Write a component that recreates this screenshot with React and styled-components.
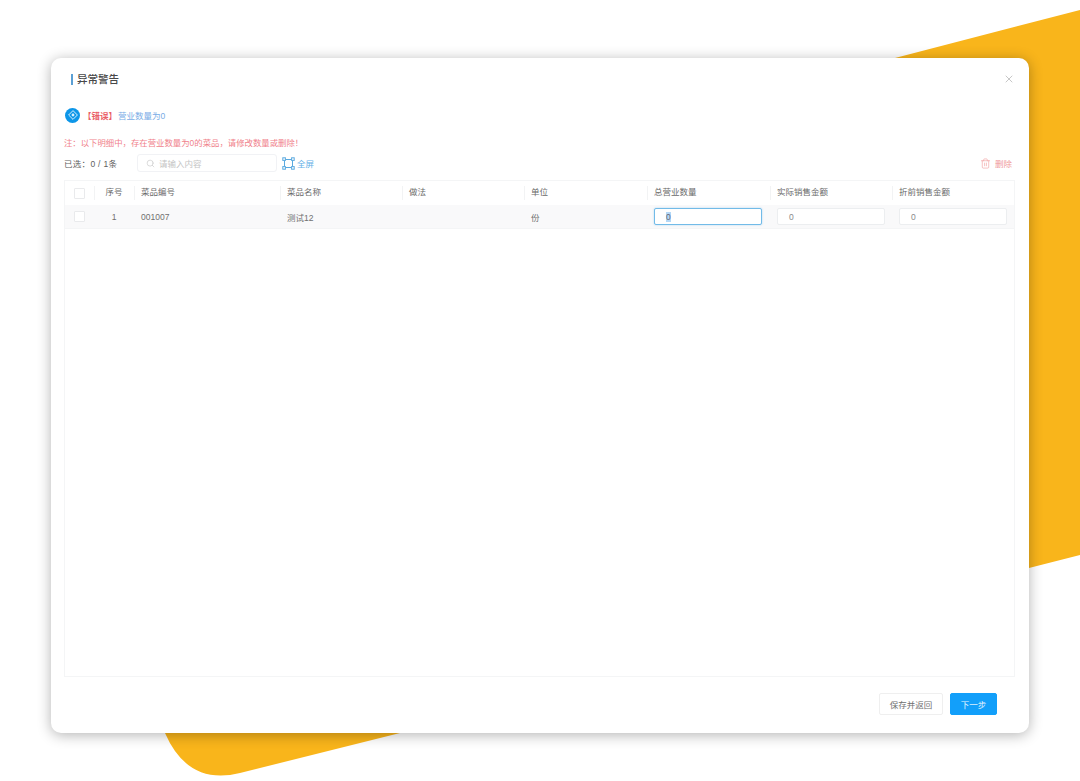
import React from "react";
import styled, { createGlobalStyle } from "styled-components";
import { X, Search, Trash2 } from "lucide-react";

const GlobalStyle = createGlobalStyle`
  html, body {
    margin: 0;
    padding: 0;
    background: #fff;
  }
  body {
    font-family: "Liberation Sans", "Noto Sans CJK SC", sans-serif;
    color: #555;
  }
`;

const columns = [
  { label: "序号", center: true },
  { label: "菜品编号" },
  { label: "菜品名称" },
  { label: "做法" },
  { label: "单位" },
  { label: "总营业数量" },
  { label: "实际销售金额" },
  { label: "折前销售金额" },
];

const App = () => {
  return (
    <Page>
      <GlobalStyle />
      <Backdrop viewBox="0 0 1080 781" aria-hidden="true">
        <path d="M895 58 L1080 10 L1080 555 L1029 568 L400 733 L240 773 Q188 786 165 733 L165 600 Z" fill="#f9b51b" />
      </Backdrop>
      <Modal>
        <Header>
          <TitleBar />
          <Title>异常警告</Title>
          <CloseIcon size={12} strokeWidth={1.3} />
        </Header>

        <Alert>
          <AlertIcon>
            <svg width="14" height="14" viewBox="0 0 14 14" fill="none">
              <path d="M7 2.6 L11.4 7 L7 11.4 L2.6 7 Z" stroke="#d8effd" strokeWidth="1" />
              <circle cx="7" cy="7" r="1.4" fill="#d8effd" />
            </svg>
          </AlertIcon>
          <AlertTag>【错误】</AlertTag>
          <AlertText>营业数量为0</AlertText>
        </Alert>

        <Note>注：以下明细中，存在营业数量为0的菜品，请修改数量或删除！</Note>

        <Toolbar>
          <Selected>已选：0 / 1条</Selected>
          <SearchBox>
            <Search size={9} strokeWidth={1.5} color="#c0c0c0" />
            <SearchHint>请输入内容</SearchHint>
          </SearchBox>
          <FullScreen>
            <svg width="13" height="13" viewBox="0 0 13 13" fill="none" stroke="#5aa9df" strokeWidth="1">
              <rect x="2.5" y="2.5" width="8" height="8" />
              <rect x="0.8" y="0.8" width="2.6" height="2.6" fill="#fff" />
              <rect x="9.6" y="0.8" width="2.6" height="2.6" fill="#fff" />
              <rect x="0.8" y="9.6" width="2.6" height="2.6" fill="#fff" />
              <rect x="9.6" y="9.6" width="2.6" height="2.6" fill="#fff" />
            </svg>
            全屏
          </FullScreen>
          <DeleteButton>
            <Trash2 size={11} strokeWidth={1.3} />
            删除
          </DeleteButton>
        </Toolbar>

        <Table>
          <HeadRow>
            <CheckCell>
              <Check />
            </CheckCell>
            {columns.map((col) => (
              <HeadCell key={col.label} $center={col.center}>
                {col.label}
              </HeadCell>
            ))}
          </HeadRow>
          <BodyRow>
            <CheckCell>
              <Check />
            </CheckCell>
            <Cell $center>1</Cell>
            <Cell>001007</Cell>
            <Cell>测试12</Cell>
            <Cell />
            <Cell>份</Cell>
            <Cell>
              <NumberBox $active>
                <Selection>0</Selection>
              </NumberBox>
            </Cell>
            <Cell>
              <NumberBox>0</NumberBox>
            </Cell>
            <Cell>
              <NumberBox>0</NumberBox>
            </Cell>
          </BodyRow>
        </Table>

        <Footer>
          <SaveButton>保存并返回</SaveButton>
          <NextButton>下一步</NextButton>
        </Footer>
      </Modal>
    </Page>
  );
};

export default App;

const gridColumns = "29px 40px 146px 122px 122px 123px 123px 122px 121px";

const Page = styled.div`
  position: relative;
  width: 1080px;
  height: 781px;
  padding: 58px 0 0 51px;
  box-sizing: border-box;
  overflow: hidden;
  background: #fff;
`;

const Backdrop = styled.svg`
  position: absolute;
  left: 0;
  top: 0;
  width: 1080px;
  height: 781px;
`;

const Modal = styled.div`
  position: relative;
  width: 978px;
  height: 675px;
  box-sizing: border-box;
  padding: 0 14px 0 13px;
  display: flex;
  flex-direction: column;
  background: #fff;
  border-radius: 10px;
  box-shadow: 0 2px 14px rgba(0, 0, 0, 0.3);
`;

const Header = styled.div`
  height: 42px;
  padding-left: 7px;
  display: flex;
  align-items: center;
  gap: 4px;
`;

const TitleBar = styled.span`
  width: 2px;
  height: 11px;
  background: #5a9fd4;
`;

const Title = styled.span`
  padding-bottom: 2px;
  font-size: 10.5px;
  font-weight: 500;
  color: #484848;
`;

const CloseIcon = styled(X)`
  margin-left: auto;
  color: #a8a8a8;
`;

const Alert = styled.div`
  height: 16px;
  margin-top: 7px;
  padding-left: 1px;
  display: flex;
  align-items: center;
`;

const AlertIcon = styled.span`
  width: 15px;
  height: 15px;
  margin-right: 3px;
  border-radius: 50%;
  background: #0d96e8;
  display: flex;
  align-items: center;
  justify-content: center;
`;

const AlertTag = styled.span`
  font-size: 8.5px;
  font-weight: 700;
  color: #ea5f68;
`;

const AlertText = styled.span`
  margin-left: 1px;
  font-size: 8.5px;
  color: #78ace6;
`;

const Note = styled.div`
  margin-top: 14px;
  height: 12px;
  line-height: 12px;
  font-size: 8.4px;
  color: #f07f8b;
`;

const Toolbar = styled.div`
  margin-top: 4px;
  height: 20px;
  display: flex;
  align-items: center;
`;

const Selected = styled.span`
  width: 73px;
  font-size: 8.5px;
  letter-spacing: 0.3px;
  color: #606060;
`;

const SearchBox = styled.div`
  width: 140px;
  height: 18px;
  box-sizing: border-box;
  padding-left: 8px;
  display: flex;
  align-items: center;
  gap: 4px;
  border: 1px solid #f1f2f5;
  border-radius: 3px;
`;

const SearchHint = styled.span`
  font-size: 8.5px;
  color: #c4c4c4;
`;

const FullScreen = styled.span`
  margin-left: 5px;
  display: flex;
  align-items: center;
  gap: 2px;
  font-size: 8.5px;
  color: #64afe6;
`;

const DeleteButton = styled.span`
  margin-left: auto;
  margin-right: 3px;
  display: flex;
  align-items: center;
  gap: 4px;
  font-size: 8.5px;
  color: #ef9a9a;
`;

const Table = styled.div`
  margin-top: 7px;
  height: 497px;
  box-sizing: border-box;
  border: 1px solid #f4f5f6;
`;

const HeadRow = styled.div`
  height: 24px;
  box-sizing: border-box;
  display: grid;
  grid-template-columns: ${gridColumns};
  align-items: center;
`;

const BodyRow = styled(HeadRow)`
  background: #f9f9fa;
  border-bottom: 1px solid #f4f5f6;
`;

const CheckCell = styled.div`
  padding-left: 9px;
  display: flex;
  align-items: center;
`;

const Check = styled.span`
  width: 9px;
  height: 9px;
  border: 1px solid #e9eaec;
  border-radius: 1px;
  background: #fff;
`;

const Cell = styled.div`
  padding: 0 7px;
  box-sizing: border-box;
  min-width: 0;
  font-size: 8.5px;
  color: #707070;
  text-align: ${(props) => (props.$center ? "center" : "left")};
`;

const HeadCell = styled(Cell)`
  position: relative;
  padding-bottom: 4px;
  color: #6a6a6a;

  &::before {
    content: "";
    position: absolute;
    left: 0;
    top: 1px;
    bottom: 1px;
    width: 1px;
    background: #f2f3f4;
  }
`;

const NumberBox = styled.div`
  width: 108px;
  height: 17px;
  box-sizing: border-box;
  padding-left: 11px;
  display: flex;
  align-items: center;
  background: #fff;
  border: 1px solid ${(props) => (props.$active ? "#72bbe8" : "#eceef0")};
  border-radius: 2px;
  box-shadow: ${(props) => (props.$active ? "0 0 2px rgba(60, 160, 230, 0.4)" : "none")};
  font-size: 8.5px;
  color: #8a8a8a;
`;

const Selection = styled.span`
  background: #b5d8f6;
  color: #667;
`;

const Footer = styled.div`
  flex: 1;
  padding-right: 18px;
  display: flex;
  align-items: flex-start;
  justify-content: flex-end;
  gap: 7px;
  padding-top: 16px;
`;

const SaveButton = styled.button`
  width: 64px;
  height: 22px;
  padding: 0;
  background: #fff;
  border: 1px solid #efefef;
  border-radius: 2px;
  font-family: inherit;
  font-size: 8.5px;
  color: #707070;
`;

const NextButton = styled(SaveButton)`
  width: 47px;
  background: #129ffa;
  border-color: #129ffa;
  color: #e8f6ff;
`;
